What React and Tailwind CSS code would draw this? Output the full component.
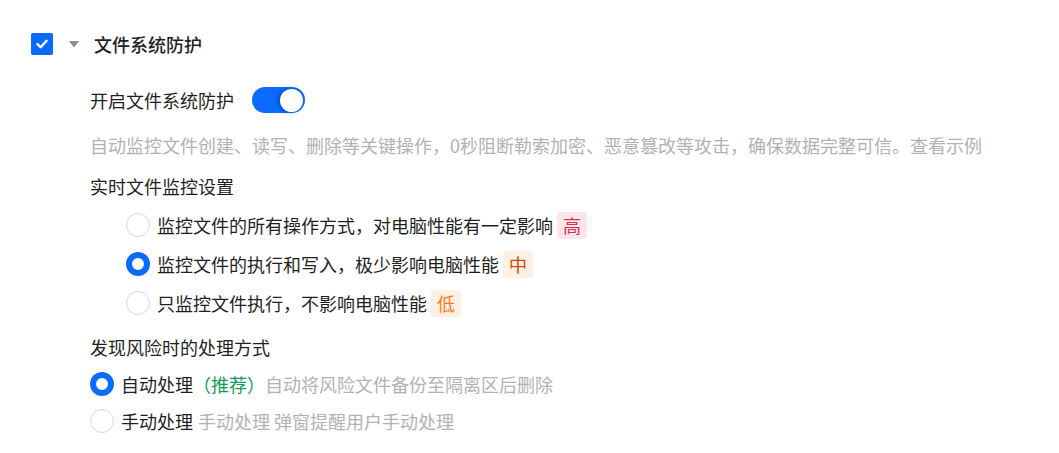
const radioCls = (on) =>
  on
    ? 'w-[24px] h-[24px] rounded-full border-[6px] border-[#0b6bff] bg-white shrink-0'
    : 'w-[24px] h-[24px] rounded-full border border-[#d3d7de] bg-white shrink-0';

function Radio({ on }) {
  return <span className={radioCls(on)} />;
}

const monitorOptions = [
  { text: '监控文件的所有操作方式，对电脑性能有一定影响', tag: '高', tagCls: 'bg-[#fde6ea] text-[#d6314d]', on: false },
  { text: '监控文件的执行和写入，极少影响电脑性能', tag: '中', tagCls: 'bg-[#fff0e4] text-[#d24d00]', on: true },
  { text: '只监控文件执行，不影响电脑性能', tag: '低', tagCls: 'bg-[#fff0e4] text-[#ff7a1f]', on: false },
];

export default function App() {
  return (
    <div className="min-h-screen bg-white pl-[31px] pt-[33px] text-[18px] text-[#1f1f1f] font-['Noto_Sans_CJK_SC','Noto_Sans',sans-serif]">
      {/* section header */}
      <div className="flex items-center h-[22px]">
        <span className="w-[22px] h-[22px] rounded-[2px] bg-[#0b6bff] flex items-center justify-center">
          <svg width="14" height="14" viewBox="0 0 14 14">
            <path d="M2.5 7.2 L5.6 10.2 L11.6 3.8" fill="none" stroke="#fff" strokeWidth="2.4" strokeLinecap="round" strokeLinejoin="round" />
          </svg>
        </span>
        <svg className="ml-[16px]" width="10" height="7" viewBox="0 0 10 7">
          <path d="M0 0 H10 L5 6.5 Z" fill="#8c8c8c" />
        </svg>
        <span className="ml-[15px] font-medium leading-[22px]">文件系统防护</span>
      </div>

      <div className="ml-[59px]">
        <div className="flex items-center h-[26px] mt-[32px]">
          <span className="leading-[26px]">开启文件系统防护</span>
          <span className="ml-[18px] w-[53px] h-[26px] rounded-full bg-[#0b6bff] flex items-center justify-end pr-[2px]">
            <span className="w-[23px] h-[23px] rounded-full bg-white shadow-[-2px_0_4px_rgba(0,40,120,0.45)]" />
          </span>
        </div>

        <p className="mt-[19px] leading-[26px] text-[#b2b2b2] whitespace-nowrap">
          自动监控文件创建、读写、删除等关键操作，0秒阻断勒索加密、恶意篡改等攻击，确保数据完整可信。查看示例
        </p>

        <p className="mt-[15px] leading-[26px]">实时文件监控设置</p>

        <div className="mt-[13px] ml-[36px] flex flex-col gap-[13px]">
          {monitorOptions.map((o) => (
            <div key={o.tag} className="flex items-center h-[26px]">
              <Radio on={o.on} />
              <span className="ml-[7px] leading-[26px]">{o.text}</span>
              <span className={'ml-[4px] h-[27px] px-[6px] rounded-[4px] leading-[27px] ' + o.tagCls}>{o.tag}</span>
            </div>
          ))}
        </div>

        <p className="mt-[18px] leading-[26px]">发现风险时的处理方式</p>

        <div className="mt-[11px] flex flex-col gap-[11px]">
          <div className="flex items-center h-[26px]">
            <Radio on />
            <span className="ml-[7px] leading-[26px]">自动处理</span>
            <span className="text-[#139a55]">（推荐）</span>
            <span className="text-[#b2b2b2]">自动将风险文件备份至隔离区后删除</span>
          </div>
          <div className="flex items-center h-[26px]">
            <Radio on={false} />
            <span className="ml-[7px] leading-[26px]">手动处理</span>
            <span className="ml-[5px] text-[#b2b2b2]">手动处理 弹窗提醒用户手动处理</span>
          </div>
        </div>
      </div>
    </div>
  );
}
